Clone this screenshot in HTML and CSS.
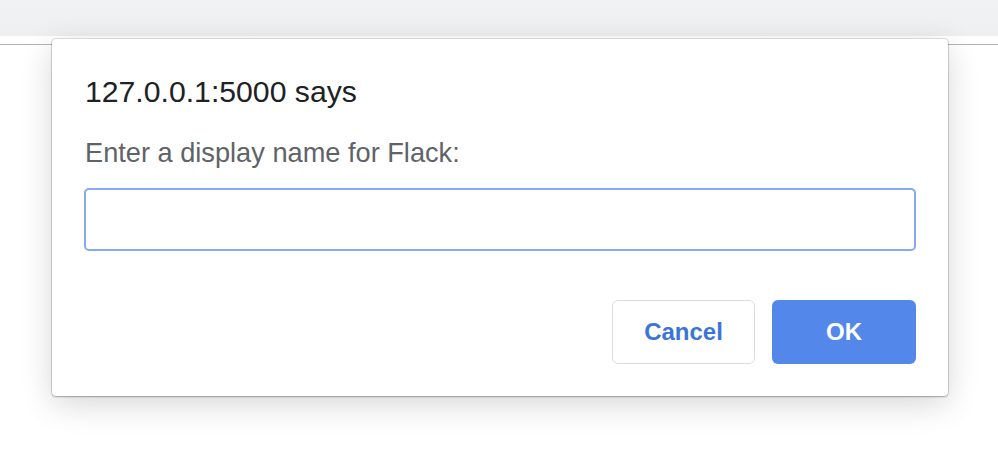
FILE: index.html
```html
<!DOCTYPE html>
<html lang="en">
<head>
<meta charset="utf-8">
<title>127.0.0.1:5000 says</title>
<link rel="stylesheet" href="styles.css">
</head>
<body>
  <div class="toolbar"></div>
  <div class="strip"></div>
  <div class="rule"></div>
  <div class="page"></div>

  <div class="dialog" role="dialog">
    <div class="title">127.0.0.1:5000 says</div>
    <div class="message">Enter a display name for Flack:</div>
    <input class="field" type="text" aria-label="display name">
    <div class="actions">
      <button class="btn btn-cancel">Cancel</button>
      <button class="btn btn-ok">OK</button>
    </div>
  </div>
</body>
</html>
```

FILE: styles.css
```css
html, body {
  margin: 0;
  padding: 0;
  background: #ffffff;
  font-family: "Liberation Sans", Arial, sans-serif;
  width: 998px;
  height: 472px;
  overflow: hidden;
}

.toolbar {
  height: 36px;
  background: linear-gradient(#f1f2f4, #eeeff1);
}

.strip {
  height: 8px;
  background: #ffffff;
}

.rule {
  height: 1px;
  background: #b4b4b6;
}

.page {
  height: 427px;
  background: #ffffff;
}

.dialog {
  position: absolute;
  left: 52px;
  top: 39px;
  width: 896px;
  height: 357px;
  box-sizing: border-box;
  padding: 35px 32px 32px 32px;
  background: #ffffff;
  border-radius: 4px;
  box-shadow:
    0 0 0 1px rgba(0, 0, 0, 0.10),
    0 1px 2px rgba(0, 0, 0, 0.25),
    0 8px 32px rgba(0, 0, 0, 0.16);
  display: flex;
  flex-direction: column;
}

.title {
  font-size: 30.2px;
  line-height: 36px;
  color: #202124;
  padding-left: 1px;
}

.message {
  margin-top: 28px;
  font-size: 27.2px;
  line-height: 30px;
  color: #5f6368;
  padding-left: 1px;
}

.field {
  margin-top: 20px;
  height: 63px;
  width: 100%;
  box-sizing: border-box;
  border: 2px solid #89a9ee;
  border-radius: 5px;
  outline: none;
  background: #ffffff;
  font-family: inherit;
  font-size: 24px;
  padding: 0 12px;
}

.actions {
  margin-top: 49px;
  display: flex;
  justify-content: flex-end;
  gap: 17px;
}

.btn {
  height: 64px;
  box-sizing: border-box;
  border-radius: 6px;
  font-family: "Liberation Sans", Arial, sans-serif;
  font-weight: bold;
  font-size: 24px;
  padding: 0;
  cursor: pointer;
}

.btn-cancel {
  width: 143px;
  background: #ffffff;
  border: 1px solid #dadce0;
  color: #3b74d8;
}

.btn-ok {
  width: 144px;
  background: #5387ea;
  border: none;
  color: #ffffff;
}
```
